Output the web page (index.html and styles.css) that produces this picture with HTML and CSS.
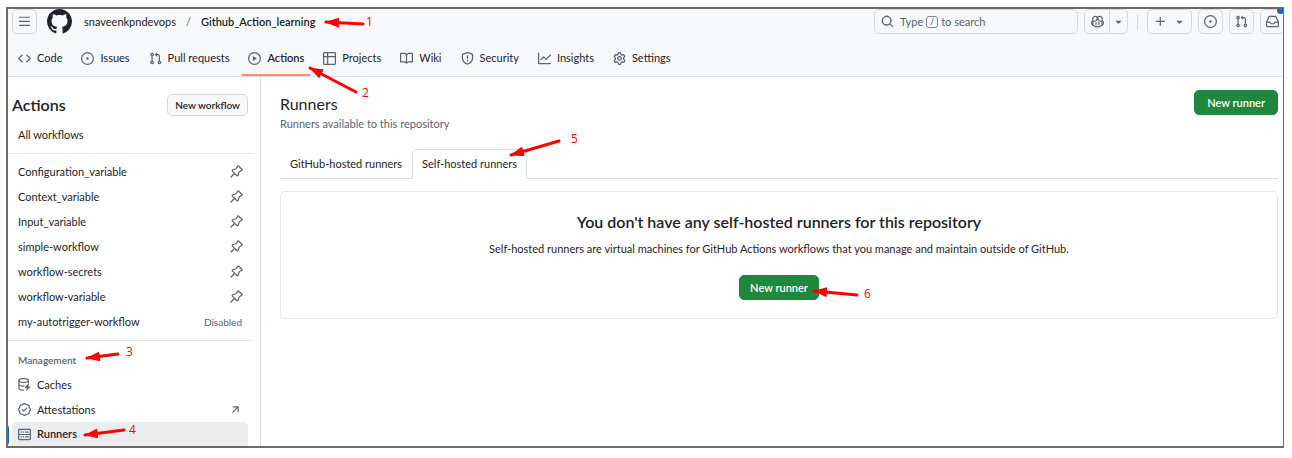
FILE: index.html
```html
<!DOCTYPE html>
<html lang="en">
<head>
<meta charset="utf-8">
<title>Runners · Github_Action_learning</title>
<link rel="stylesheet" href="styles.css">
</head>
<body>
<svg class="defs" aria-hidden="true">
  <symbol id="menu" viewBox="0 0 16 16"><path d="M1 2.75A.75.75 0 0 1 1.75 2h12.5a.75.75 0 0 1 0 1.5H1.75A.75.75 0 0 1 1 2.75Zm0 5A.75.75 0 0 1 1.75 7h12.5a.75.75 0 0 1 0 1.5H1.75A.75.75 0 0 1 1 7.75ZM1.75 12h12.5a.75.75 0 0 1 0 1.5H1.75a.75.75 0 0 1 0-1.5Z"/></symbol>
  <symbol id="mark" viewBox="0 0 16 16"><path d="M8 0c4.42 0 8 3.58 8 8a8.013 8.013 0 0 1-5.45 7.59c-.4.08-.55-.17-.55-.38 0-.27.01-1.13.01-2.2 0-.75-.25-1.23-.54-1.48 1.78-.2 3.65-.88 3.65-3.95 0-.88-.31-1.59-.82-2.15.08-.2.36-1.02-.08-2.12 0 0-.67-.22-2.2.82-.64-.18-1.32-.27-2-.27-.68 0-1.36.09-2 .27-1.53-1.03-2.2-.82-2.2-.82-.44 1.1-.16 1.92-.08 2.12-.51.56-.82 1.28-.82 2.15 0 3.06 1.86 3.75 3.64 3.95-.23.2-.44.55-.51 1.07-.46.21-1.61.55-2.33-.66-.15-.24-.6-.83-1.23-.82-.67.01-.27.38.01.53.34.19.73.9.82 1.13.16.45.68 1.31 2.69.94 0 .67.01 1.3.01 1.49 0 .21-.15.45-.55.38A7.995 7.995 0 0 1 0 8c0-4.42 3.58-8 8-8Z"/></symbol>
  <symbol id="code" viewBox="0 0 16 16"><path d="m11.28 3.22 4.25 4.25a.75.75 0 0 1 0 1.06l-4.25 4.25a.75.75 0 0 1-1.06-1.06L13.94 8l-3.72-3.72a.75.75 0 0 1 1.06-1.06Zm-6.56 0a.75.75 0 0 1 1.06 1.06L2.06 8l3.72 3.72a.75.75 0 0 1-1.06 1.06L.47 8.53a.75.75 0 0 1 0-1.06Z"/></symbol>
  <symbol id="issue" viewBox="0 0 16 16"><path d="M8 9.5a1.5 1.5 0 1 0 0-3 1.5 1.5 0 0 0 0 3Z"/><path d="M8 0a8 8 0 1 1 0 16A8 8 0 0 1 8 0ZM1.5 8a6.5 6.5 0 1 0 13 0 6.5 6.5 0 0 0-13 0Z"/></symbol>
  <symbol id="pull" viewBox="0 0 16 16"><path d="M1.5 3.25a2.25 2.25 0 1 1 3 2.122v5.256a2.251 2.251 0 1 1-1.5 0V5.372A2.25 2.25 0 0 1 1.5 3.25Zm5.677-.177L9.573.677A.25.25 0 0 1 10 .854V2.5h1A2.5 2.5 0 0 1 13.5 5v5.628a2.251 2.251 0 1 1-1.5 0V5a1 1 0 0 0-1-1h-1v1.646a.25.25 0 0 1-.427.177L7.177 3.427a.25.25 0 0 1 0-.354ZM3.75 2.5a.75.75 0 1 0 0 1.5.75.75 0 0 0 0-1.5Zm0 9.5a.75.75 0 1 0 0 1.5.75.75 0 0 0 0-1.5Zm8.25.75a.75.75 0 1 0 1.5 0 .75.75 0 0 0-1.5 0Z"/></symbol>
  <symbol id="play" viewBox="0 0 16 16"><path d="M8 0a8 8 0 1 1 0 16A8 8 0 0 1 8 0ZM1.5 8a6.5 6.5 0 1 0 13 0 6.5 6.5 0 0 0-13 0Zm4.879-2.773 4.264 2.559a.25.25 0 0 1 0 .428l-4.264 2.559A.25.25 0 0 1 6 10.559V5.442a.25.25 0 0 1 .379-.215Z"/></symbol>
  <symbol id="table" viewBox="0 0 16 16"><path d="M0 1.75C0 .784.784 0 1.75 0h12.5C15.216 0 16 .784 16 1.75v12.5A1.75 1.75 0 0 1 14.25 16H1.75A1.75 1.75 0 0 1 0 14.25ZM6.5 6.5v8h7.75a.25.25 0 0 0 .25-.25V6.5Zm8-1.5V1.75a.25.25 0 0 0-.25-.25H6.5V5Zm-13 1.5v7.75c0 .138.112.25.25.25H5v-8ZM5 5V1.5H1.75a.25.25 0 0 0-.25.25V5Z"/></symbol>
  <symbol id="book" viewBox="0 0 16 16"><path d="M0 1.75A.75.75 0 0 1 .75 1h4.253c1.227 0 2.317.59 3 1.501A3.743 3.743 0 0 1 11.006 1h4.245a.75.75 0 0 1 .75.75v10.5a.75.75 0 0 1-.75.75h-4.507a2.25 2.25 0 0 0-1.591.659l-.622.621a.75.75 0 0 1-1.06 0l-.622-.621A2.25 2.25 0 0 0 5.258 13H.75a.75.75 0 0 1-.75-.75Zm7.251 10.324.004-5.073-.002-2.253A2.25 2.25 0 0 0 5.003 2.5H1.5v9h3.757a3.75 3.75 0 0 1 1.994.574ZM8.755 4.75l-.004 7.322a3.752 3.752 0 0 1 1.992-.572H14.5v-9h-3.495a2.25 2.25 0 0 0-2.25 2.25Z"/></symbol>
  <symbol id="shield" viewBox="0 0 16 16"><path d="M7.467.133a1.748 1.748 0 0 1 1.066 0l5.25 1.68A1.75 1.75 0 0 1 15 3.48V7c0 1.566-.32 3.182-1.303 4.682-.983 1.498-2.585 2.813-5.032 3.855a1.697 1.697 0 0 1-1.33 0c-2.447-1.042-4.049-2.357-5.032-3.855C1.32 10.182 1 8.566 1 7V3.48a1.75 1.75 0 0 1 1.217-1.667Zm.61 1.429a.25.25 0 0 0-.153 0l-5.25 1.68a.25.25 0 0 0-.174.238V7c0 1.358.275 2.666 1.057 3.86.784 1.194 2.121 2.34 4.366 3.297a.196.196 0 0 0 .154 0c2.245-.956 3.582-2.104 4.366-3.298C13.225 9.666 13.5 8.36 13.5 7V3.48a.251.251 0 0 0-.174-.237l-5.25-1.68ZM8.75 4.75v3a.75.75 0 0 1-1.5 0v-3a.75.75 0 0 1 1.5 0ZM9 10.5a1 1 0 1 1-2 0 1 1 0 0 1 2 0Z"/></symbol>
  <symbol id="graph" viewBox="0 0 16 16"><path d="M1.5 1.75V13.5h13.75a.75.75 0 0 1 0 1.5H.75a.75.75 0 0 1-.75-.75V1.75a.75.75 0 0 1 1.5 0Zm14.28 2.53-5.25 5.25a.75.75 0 0 1-1.06 0L7 7.06 4.28 9.78a.751.751 0 0 1-1.042-.018.751.751 0 0 1-.018-1.042l3.25-3.25a.75.75 0 0 1 1.06 0L10 7.94l4.72-4.72a.751.751 0 0 1 1.042.018.751.751 0 0 1 .018 1.042Z"/></symbol>
  <symbol id="gear" viewBox="0 0 16 16"><g fill="none" stroke="currentColor" stroke-width="1.5" stroke-linejoin="round"><path d="M6.7 1.1 Q8 .6 9.3 1.1 L9.8 3 L11.3 3.8 L13.2 3.3 Q14.2 4.2 14.5 5.5 L13.1 7 V9 L14.5 10.5 Q14.2 11.8 13.2 12.7 L11.3 12.2 L9.8 13 L9.3 14.9 Q8 15.4 6.7 14.9 L6.2 13 L4.7 12.2 L2.8 12.7 Q1.8 11.8 1.5 10.5 L2.9 9 V7 L1.5 5.5 Q1.8 4.2 2.8 3.3 L4.7 3.8 L6.2 3Z"/><circle cx="8" cy="8" r="2.2"/></g></symbol>
  <symbol id="search" viewBox="0 0 16 16"><path d="M10.68 11.74a6 6 0 0 1-7.922-8.982 6 6 0 0 1 8.982 7.922l3.04 3.04a.749.749 0 0 1-.326 1.275.749.749 0 0 1-.734-.215ZM11.5 7a4.499 4.499 0 1 0-8.997 0A4.499 4.499 0 0 0 11.5 7Z"/></symbol>
  <symbol id="copilot" viewBox="0 0 16 16"><g fill="none" stroke="currentColor" stroke-width="1.5" stroke-linejoin="round"><path d="M2.4 7.1 C1.4 7.6.8 8.5.8 9.2 V11 C2.4 13.3 5 14.5 8 14.5 S13.6 13.3 15.2 11 V9.2 C15.2 8.5 14.6 7.6 13.6 7.1"/><path d="M2.4 7 V12.2 M13.6 7 V12.2 M2.5 7.5 C1.5 3.5 2.5 1.8 5.4 1.6 C7.3 1.5 8 2.3 7.6 4.6 C7.3 6.8 6.3 7.7 4.5 7.7 C3.5 7.7 2.9 7.6 2.5 7.2 M13.5 7.5 C14.5 3.5 13.5 1.8 10.6 1.6 C8.7 1.5 8 2.3 8.4 4.6 C8.7 6.8 9.7 7.7 11.5 7.7 C12.5 7.7 13.1 7.6 13.5 7.2"/><path d="M6.2 9.5 V11.5 M9.8 9.5 V11.5" stroke-linecap="round"/></g></symbol>
  <symbol id="caret" viewBox="0 0 16 16"><path d="m4.427 7.427 3.396 3.396a.25.25 0 0 0 .354 0l3.396-3.396A.25.25 0 0 0 11.396 7H4.604a.25.25 0 0 0-.177.427Z"/></symbol>
  <symbol id="plus" viewBox="0 0 16 16"><path d="M7.75 2a.75.75 0 0 1 .75.75V7h4.25a.75.75 0 0 1 0 1.5H8.5v4.25a.75.75 0 0 1-1.5 0V8.5H2.75a.75.75 0 0 1 0-1.5H7V2.75A.75.75 0 0 1 7.75 2Z"/></symbol>
  <symbol id="inbox" viewBox="0 0 16 16"><path d="M2.8 2.06A1.75 1.75 0 0 1 4.41 1h7.18c.7 0 1.333.417 1.61 1.06l2.74 6.395c.04.093.06.194.06.295v4.5A1.75 1.75 0 0 1 14.25 15H1.75A1.75 1.75 0 0 1 0 13.25v-4.5c0-.101.02-.202.06-.295Zm1.61.44a.25.25 0 0 0-.23.152L1.887 8H4.75a.75.75 0 0 1 .6.3L6.625 10h2.75l1.275-1.7a.75.75 0 0 1 .6-.3h2.863L11.82 2.652a.25.25 0 0 0-.23-.152Zm10.09 7h-2.875l-1.275 1.7a.75.75 0 0 1-.6.3h-3.5a.75.75 0 0 1-.6-.3L4.375 9.5H1.5v3.75c0 .138.112.25.25.25h12.5a.25.25 0 0 0 .25-.25Z"/></symbol>
  <symbol id="pin" viewBox="0 0 16 16"><path d="m11.294.984 3.722 3.722a1.75 1.75 0 0 1-.504 2.826l-1.327.613a3.089 3.089 0 0 0-1.707 2.084l-.584 2.454c-.317 1.332-1.972 1.8-2.94.832L5.75 11.311 1.78 15.28a.749.749 0 1 1-1.06-1.06l3.969-3.97-2.204-2.204c-.968-.968-.5-2.623.832-2.94l2.454-.584a3.08 3.08 0 0 0 2.084-1.707l.613-1.327a1.75 1.75 0 0 1 2.826-.504ZM6.283 9.723l2.732 2.731a.25.25 0 0 0 .42-.119l.584-2.454a4.586 4.586 0 0 1 2.537-3.098l1.328-.613a.25.25 0 0 0 .072-.404l-3.722-3.722a.25.25 0 0 0-.404.072l-.613 1.328a4.584 4.584 0 0 1-3.098 2.537l-2.454.584a.25.25 0 0 0-.119.42l2.731 2.732Z"/></symbol>
  <symbol id="cache" viewBox="0 0 16 16"><g fill="none" stroke="currentColor" stroke-width="1.5" stroke-linecap="round" stroke-linejoin="round"><ellipse cx="7" cy="3.2" rx="5.8" ry="2.3"/><path d="M1.2 3.2V12.7C1.2 14 3.5 15 6.8 15 M1.2 7.8C1.2 9.2 4 10.2 7.2 10 M12.8 3.2V6"/></g><path d="M12.6 7.1 8.6 11.4c-.3.3-.1.8.4.8h2.1l-1 3.1c-.2.6.4.9.8.5l4.3-4.6c.3-.4.1-.8-.4-.8h-2.1l.9-2.9c.1-.6-.6-.8-1-.4Z"/></symbol>
  <symbol id="verified" viewBox="0 0 16 16"><path d="m9.585.52.929.68c.153.112.331.186.518.215l1.138.175a2.678 2.678 0 0 1 2.24 2.24l.174 1.139c.029.187.103.365.215.518l.68.928a2.677 2.677 0 0 1 0 3.17l-.68.928a1.174 1.174 0 0 0-.215.518l-.175 1.138a2.678 2.678 0 0 1-2.241 2.241l-1.138.175a1.17 1.17 0 0 0-.518.215l-.928.68a2.677 2.677 0 0 1-3.17 0l-.928-.68a1.174 1.174 0 0 0-.518-.215L3.83 14.41a2.678 2.678 0 0 1-2.24-2.24l-.175-1.138a1.17 1.17 0 0 0-.215-.518l-.68-.928a2.677 2.677 0 0 1 0-3.17l.68-.928c.112-.153.186-.331.215-.518l.175-1.14a2.678 2.678 0 0 1 2.24-2.24l1.139-.175c.187-.029.365-.103.518-.215l.928-.68a2.677 2.677 0 0 1 3.17 0ZM7.303 1.728l-.927.68a2.67 2.67 0 0 1-1.18.489l-1.137.174a1.179 1.179 0 0 0-.987.987l-.174 1.136a2.677 2.677 0 0 1-.489 1.18l-.68.928a1.18 1.18 0 0 0 0 1.394l.68.927c.256.348.424.753.489 1.18l.174 1.137c.078.509.478.909.987.987l1.136.174a2.67 2.67 0 0 1 1.18.489l.928.68c.414.305.979.305 1.394 0l.927-.68a2.67 2.67 0 0 1 1.18-.489l1.137-.174a1.18 1.18 0 0 0 .987-.987l.174-1.136a2.67 2.67 0 0 1 .489-1.18l.68-.928a1.176 1.176 0 0 0 0-1.394l-.68-.927a2.686 2.686 0 0 1-.489-1.18l-.174-1.137a1.179 1.179 0 0 0-.987-.987l-1.136-.174a2.677 2.677 0 0 1-1.18-.489l-.928-.68a1.176 1.176 0 0 0-1.394 0ZM11.28 6.78l-3.75 3.75a.75.75 0 0 1-1.06 0L4.72 8.78a.751.751 0 0 1 .018-1.042.751.751 0 0 1 1.042-.018L7 8.94l3.22-3.22a.751.751 0 0 1 1.042.018.751.751 0 0 1 .018 1.042Z"/></symbol>
  <symbol id="server" viewBox="0 0 16 16"><g fill="none" stroke="currentColor" stroke-width="1.5"><rect x=".8" y="1.8" width="14.4" height="6.2" rx="1"/><rect x=".8" y="8" width="14.4" height="6.2" rx="1"/><path d="M3.2 5h1.5M6 5h1.5M9 5h4M3.2 11h1.5M6 11h1.5M9 11h4"/></g></symbol>
  <symbol id="arrow-out" viewBox="0 0 16 16"><path d="M4.53 4.75A.75.75 0 0 1 5.28 4h6.01a.75.75 0 0 1 .75.75v6.01a.75.75 0 0 1-1.5 0v-4.2l-5.26 5.261a.749.749 0 0 1-1.275-.326.749.749 0 0 1 .215-.734L9.48 5.5h-4.2a.75.75 0 0 1-.75-.75Z"/></symbol>
</svg>

<div class="frame">
  <header class="header">
    <div class="topbar">
      <button class="box-btn" aria-label="Open menu"><svg class="icon"><use href="#menu"/></svg></button>
      <a class="logo" href="#" aria-label="Homepage"><svg><use href="#mark"/></svg></a>
      <nav class="crumbs" aria-label="Breadcrumb"><a href="#">snaveenkpndevops</a><span class="slash">/</span><a class="strong" href="#">Github_Action_learning</a></nav>
      <div class="tools">
        <button class="search"><svg class="icon"><use href="#search"/></svg><span>Type</span><kbd>/</kbd><span>to search</span></button>
        <div class="split">
          <button aria-label="Copilot"><svg class="icon"><use href="#copilot"/></svg></button>
          <button aria-label="Copilot options"><svg class="icon"><use href="#caret"/></svg></button>
        </div>
        <span class="rule"></span>
        <button class="box-btn create" aria-label="Create new"><svg class="icon"><use href="#plus"/></svg><svg class="icon"><use href="#caret"/></svg></button>
        <button class="box-btn" aria-label="Your issues"><svg class="icon"><use href="#issue"/></svg></button>
        <button class="box-btn" aria-label="Your pull requests"><svg class="icon"><use href="#pull"/></svg></button>
        <button class="box-btn inbox" aria-label="Notifications"><svg class="icon"><use href="#inbox"/></svg><span class="dot"></span></button>
      </div>
    </div>
    <nav class="repo-nav" aria-label="Repository">
      <a href="#"><svg class="icon"><use href="#code"/></svg>Code</a>
      <a href="#"><svg class="icon"><use href="#issue"/></svg>Issues</a>
      <a href="#"><svg class="icon"><use href="#pull"/></svg>Pull requests</a>
      <a class="current" href="#" aria-current="page"><svg class="icon"><use href="#play"/></svg>Actions</a>
      <a href="#"><svg class="icon"><use href="#table"/></svg>Projects</a>
      <a href="#"><svg class="icon"><use href="#book"/></svg>Wiki</a>
      <a href="#"><svg class="icon"><use href="#shield"/></svg>Security</a>
      <a href="#"><svg class="icon"><use href="#graph"/></svg>Insights</a>
      <a href="#"><svg class="icon"><use href="#gear"/></svg>Settings</a>
    </nav>
  </header>

  <div class="layout">
    <aside class="sidebar">
      <div class="side-head"><h2>Actions</h2><button class="btn-small">New workflow</button></div>
      <a class="row" href="#">All workflows</a>
      <hr>
      <div class="row"><a href="#">Configuration_variable</a><button class="pin" aria-label="Pin Configuration_variable"><svg class="icon"><use href="#pin"/></svg></button></div>
      <div class="row"><a href="#">Context_variable</a><button class="pin" aria-label="Pin Context_variable"><svg class="icon"><use href="#pin"/></svg></button></div>
      <div class="row"><a href="#">Input_variable</a><button class="pin" aria-label="Pin Input_variable"><svg class="icon"><use href="#pin"/></svg></button></div>
      <div class="row"><a href="#">simple-workflow</a><button class="pin" aria-label="Pin simple-workflow"><svg class="icon"><use href="#pin"/></svg></button></div>
      <div class="row"><a href="#">workflow-secrets</a><button class="pin" aria-label="Pin workflow-secrets"><svg class="icon"><use href="#pin"/></svg></button></div>
      <div class="row"><a href="#">workflow-variable</a><button class="pin" aria-label="Pin workflow-variable"><svg class="icon"><use href="#pin"/></svg></button></div>
      <div class="row"><a href="#">my-autotrigger-workflow</a><span class="state">Disabled</span></div>
      <hr>
      <h3>Management</h3>
      <a class="row" href="#"><svg class="icon"><use href="#cache"/></svg>Caches</a>
      <a class="row" href="#"><svg class="icon"><use href="#verified"/></svg>Attestations<svg class="icon out"><use href="#arrow-out"/></svg></a>
      <a class="row selected" href="#" aria-current="page"><svg class="icon"><use href="#server"/></svg>Runners</a>
    </aside>

    <main class="main">
      <div class="title">
        <div><h1>Runners</h1><p>Runners available to this repository</p></div>
        <button class="btn-primary">New runner</button>
      </div>
      <nav class="tabs" aria-label="Runner type">
        <a href="#">GitHub-hosted runners</a>
        <a class="active" href="#" aria-current="page">Self-hosted runners</a>
      </nav>
      <section class="blank">
        <h2>You don't have any self-hosted runners for this repository</h2>
        <p>Self-hosted runners are virtual machines for GitHub Actions workflows that you manage and maintain outside of GitHub.</p>
        <button class="btn-primary">New runner</button>
      </section>
    </main>
  </div>
</div>

<svg class="notes" width="900" height="458" viewBox="0 0 900 458">
  <defs><marker id="head" viewBox="0 0 14 10" refX="1" refY="5" markerWidth="14" markerHeight="10" markerUnits="userSpaceOnUse" orient="auto"><path d="M0 5 14 0V10Z"/></marker></defs>
  <g class="arrows">
    <path marker-start="url(#head)" d="M326 22 363 24"/>
    <path marker-start="url(#head)" d="M310 68 356 92"/>
    <path marker-start="url(#head)" d="M87 358 118 354"/>
    <path marker-start="url(#head)" d="M85 435 124 430"/>
    <path marker-start="url(#head)" d="M511 155 559 141"/>
    <path marker-start="url(#head)" d="M814 291 857 295"/>
  </g>
  <g class="labels">
    <text x="366" y="26">1</text>
    <text x="362" y="97">2</text>
    <text x="126" y="356">3</text>
    <text x="129" y="434">4</text>
    <text x="571" y="143">5</text>
    <text x="864" y="298">6</text>
  </g>
</svg>
</body>
</html>
```

FILE: styles.css
```css
* { box-sizing: border-box; }

body {
  margin: 0;
  padding: 7px 8px 0 6px;
  background: #fff;
  color: #1f2328;
  font: 11px/16px Lato, "Open Sans", sans-serif;
}

a { color: inherit; text-decoration: none; }
button { font: inherit; color: inherit; margin: 0; padding: 0; cursor: pointer; }
h1, h2, h3, p { margin: 0; }

.defs { position: absolute; width: 0; height: 0; }
.icon { width: 13px; height: 13px; flex: none; fill: currentColor; color: #59636e; }

.frame { border: 2px solid #6b6b6b; border-width: 2px 1px 2px 2px; overflow: hidden; }

.header { background: #f6f8fa; border-bottom: 1px solid #d9dfe6; }
.topbar { display: flex; align-items: center; height: 25px; padding-left: 4px; }

.box-btn {
  display: flex; align-items: center; justify-content: center; flex: none;
  width: 25px; height: 25px;
  border: 1px solid #d1d9e0; border-radius: 5px; background: #f6f8fa;
}
.logo { display: flex; margin: 0 12px 0 10px; }
.logo svg { width: 25px; height: 25px; fill: #1f2328; }
.crumbs { display: flex; gap: 10px; white-space: nowrap; }
.slash { color: #59636e; }
.strong { font-weight: 600; }

.tools { display: flex; align-items: center; gap: 6px; margin-left: auto; margin-right: -2px; }
.search {
  display: flex; align-items: center; gap: 3px;
  width: 204px; height: 25px; padding: 0 6px;
  border: 1px solid #d1d9e0; border-radius: 5px; background: #f6f8fa; color: #59636e;
}
.search .icon { margin-right: 3px; }
kbd { width: 12px; height: 12px; border: 1px solid #818b98; border-radius: 3px; font: 9px/10px "Open Sans", sans-serif; text-align: center; }
.split { display: flex; border: 1px solid #d1d9e0; border-radius: 5px; height: 25px; }
.split button { display: flex; align-items: center; justify-content: center; width: 24px; border: 0; background: none; }
.split button + button { width: 18px; border-left: 1px solid #d1d9e0; }
.rule { width: 1px; height: 16px; margin: 0 3px; background: #d1d9e0; }
.create { width: 45px; gap: 6px; }
.inbox { position: relative; }
.dot { position: absolute; top: -3px; right: 0; width: 7px; height: 7px; border-radius: 50%; background: #0969da; }

.repo-nav { display: flex; gap: 7px; height: 42px; padding: 8px 4px 0; white-space: nowrap; }
.repo-nav a { display: flex; align-items: center; gap: 6px; padding: 0 6px; height: 34px; border-bottom: 2px solid transparent; }
.repo-nav .current { font-weight: 600; border-bottom-color: #fd8c73; }

.layout { display: flex; }
.sidebar { flex: none; width: 253px; padding: 16px 12px 0 4px; border-right: 1px solid #d9dfe6; }
.side-head { display: flex; align-items: center; justify-content: space-between; height: 24px; margin-bottom: 5px; }
.side-head h2 { font-size: 16px; line-height: 24px; font-weight: 600; }
.btn-small { height: 22px; padding: 0 7px; border: 1px solid #d1d9e0; border-radius: 5px; background: #f6f8fa; font-size: 10px; font-weight: 600; }
.row { display: flex; align-items: center; gap: 6px; height: 25px; padding: 0 6px; white-space: nowrap; border-radius: 5px; }
.row .pin, .row .state, .row .out { margin-left: auto; }
.pin { display: flex; border: 0; background: none; }
.row .pin { margin-right: -1px; }
.state { color: #59636e; font-size: 10px; }
hr { margin: 6px -6px 5px -4px; border: 0; border-top: 1px solid #e4e8ec; }
.sidebar h3 { padding: 7px 6px 0; height: 26px; font-size: 10px; line-height: 14px; font-weight: 600; color: #59636e; }
.selected { position: relative; height: 24px; background: #ebecee; font-weight: 600; border-radius: 5px 5px 0 0; }
.selected::before { content: ""; position: absolute; left: -6px; top: 4px; width: 3px; height: 18px; border-radius: 3px; background: #0969da; }

.main { flex: 1; min-width: 0; padding: 13px 5px 0 19px; }
.title { display: flex; justify-content: space-between; align-items: flex-start; }
.title h1 { font-size: 16px; line-height: 28px; font-weight: 400; }
.title p { line-height: 12px; color: #59636e; }
.btn-primary { height: 25px; padding: 0 12px; border: 1px solid #1f883d; border-radius: 5px; background: #1f883d; color: #fff; font-weight: 600; white-space: nowrap; }

.tabs { display: flex; height: 30px; margin-top: 19px; border-bottom: 1px solid #d9dfe6; white-space: nowrap; }
.tabs a { height: 30px; padding: 0 9px; line-height: 28px; border: 1px solid transparent; border-bottom: 0; }
.tabs .active { border-color: #d9dfe6; border-radius: 5px 5px 0 0; background: #fff; }

.blank { display: flex; flex-direction: column; align-items: center; margin-top: 12px; padding: 19px 16px 18px; border: 1px solid #e4e8ec; border-radius: 5px; text-align: center; }
.blank h2 { font-size: 16px; line-height: 22px; font-weight: 600; }
.blank p { margin: 8px 0 18px; }
.blank .btn-primary { padding: 0 10px; }

.notes { position: absolute; left: 0; top: 0; pointer-events: none; }
.arrows { stroke: #f00; stroke-width: 3; stroke-linecap: round; fill: none; }
.notes marker path { fill: #f00; stroke: none; }
.labels { fill: #f00; font: 12px "Open Sans", sans-serif; }
```
